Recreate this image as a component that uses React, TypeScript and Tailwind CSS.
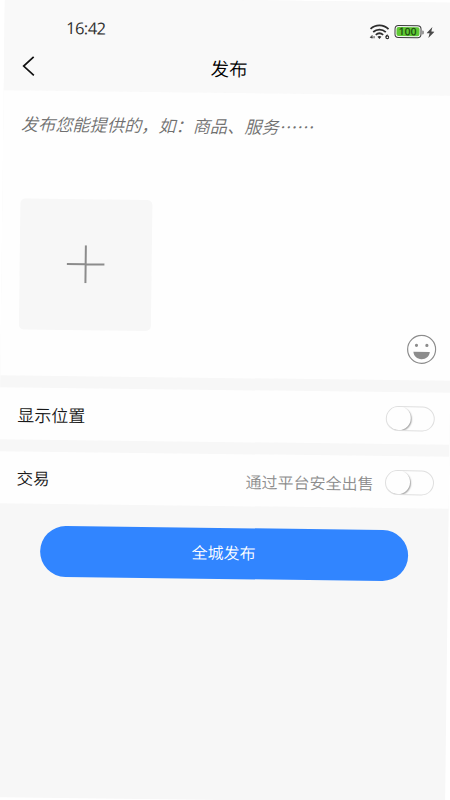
import { useState } from "react";

type SwitchProps = {
  checked: boolean;
  label: string;
  onChange: (value: boolean) => void;
};

function Switch({ checked, label, onChange }: SwitchProps) {
  return (
    <button
      role="switch"
      aria-checked={checked}
      aria-label={label}
      onClick={() => onChange(!checked)}
      className={`flex h-[25px] w-[49px] shrink-0 items-center overflow-hidden rounded-full border ${
        checked ? "justify-end border-[#3185ff] bg-[#3185ff]" : "border-[#dfdfdf] bg-[#fefefe]"
      }`}
    >
      <span className="size-[24px] shrink-0 rounded-full bg-[#fefefe] shadow-[1px_1px_1.5px_rgba(0,0,0,0.35)]" />
    </button>
  );
}

function WifiIcon() {
  return (
    <svg width="20" height="16" viewBox="0 0 20 16" fill="none" stroke="#2e2e2e">
      <path d="M1 5.2C6.2.4 13.8.4 19 5.2" strokeWidth="1.8" />
      <path d="M3.7 8.2c3.7-3.3 8.9-3.3 12.6 0" strokeWidth="1.8" />
      <path d="M6.3 11c2.2-1.9 5.2-1.9 7.4 0" strokeWidth="1.8" />
      <path d="M8 12.9c1.2-.9 2.8-.9 4 0l-2 2.2z" fill="#2e2e2e" stroke="none" />
      <path d="M2.6 11.8.8 13.7h2.2M2.6 11.8v2.9M4.6 12.3v2.2" strokeWidth=".9" />
      <path d="M18.2 10.8c-1.2.8-1.7 1.5-1.7 2.4" strokeWidth="1.1" />
      <circle cx="17.9" cy="13.3" r="1.4" strokeWidth="1.1" />
    </svg>
  );
}

function StatusBar() {
  return (
    <div className="flex h-[43px] items-center justify-between pr-[20px] pl-[61.5px] pt-[16px]">
      <span className="font-['Open_Sans','Noto_Sans',sans-serif] pt-px text-[16.5px] leading-none font-medium tracking-[-0.5px] text-[#303030]">
        16:42
      </span>
      <div className="flex items-center">
        <WifiIcon />
        <div className="ml-[5px] flex h-[13px] w-[27px] items-center rounded-[4px] border-[1.5px] border-[#3a3a3a] p-px">
          <div className="flex h-full w-full items-center justify-center rounded-[2px] bg-[#5fc934] font-['Open_Sans',sans-serif] text-[10.5px] leading-none font-semibold text-[#1d4d10]">
            100
          </div>
        </div>
        <div className="ml-px h-[4px] w-[1.5px] rounded-r-sm bg-[#3a3a3a]" />
        <svg className="ml-[3px]" width="8" height="12" viewBox="0 0 8 12" fill="#4a4a4a">
          <path d="M5.8.5 0 6.9h3.1L1.9 11.5 8 5.1H4.8z" />
        </svg>
      </div>
    </div>
  );
}

export default function App() {
  const [content, setContent] = useState("");
  const [showLocation, setShowLocation] = useState(false);
  const [trade, setTrade] = useState(false);

  return (
    <div className="h-[800px] w-[450px] overflow-hidden bg-white font-['Noto_Sans_CJK_SC',sans-serif] font-[350]">
      <div className="flex h-[800px] w-[450px] rotate-[0.7deg] flex-col bg-[#f7f7f7]">
        <header className="h-[93px] shrink-0 bg-[#f9f9f9]">
          <StatusBar />
          <div className="grid h-[50px] grid-cols-[1fr_auto_1fr] items-center px-[18px]">
            <button aria-label="返回" className="w-fit">
              <svg width="13" height="21" viewBox="0 0 13 21" fill="none" stroke="#111" strokeWidth="1.7">
                <path d="M11.5 1.2 1.6 10.5l10.3 9.3" />
              </svg>
            </button>
            <h1 className="text-[18.5px] leading-none text-black">发布</h1>
          </div>
        </header>

        <section className="flex h-[285px] shrink-0 flex-col bg-[#fefefe] pr-[16.5px] pl-[17.5px] pt-[20px]">
          <textarea
            value={content}
            onChange={(e) => setContent(e.target.value)}
            placeholder="发布您能提供的，如：商品、服务……"
            className="h-[87.5px] w-full resize-none text-[17.2px] leading-[26px] italic outline-none placeholder:text-[#707070]"
          />
          <button
            aria-label="添加图片"
            className="flex h-[131.5px] w-[132px] items-center justify-center rounded-[5px] bg-[#f7f7f7]"
          >
            <svg width="38" height="38" viewBox="0 0 38 38" stroke="#8c8c8c" strokeWidth="2">
              <path d="M19 0v38M0 19h38" />
            </svg>
          </button>
          <button aria-label="表情" className="-mr-[2px] self-end">
            <svg width="30" height="30" viewBox="0 0 30 30" fill="#8c8c8c">
              <circle cx="15" cy="15" r="14" fill="none" stroke="#8c8c8c" strokeWidth="1.2" />
              <circle cx="9.8" cy="11" r="1.6" />
              <circle cx="20.2" cy="11" r="1.6" />
              <path d="M6.8 17.5h16.4c-.3 4.5-3.8 7.3-8.2 7.3s-7.9-2.8-8.2-7.3z" />
            </svg>
          </button>
        </section>

        <section className="mt-[12px] flex h-[52px] shrink-0 items-center justify-between bg-[#fefefe] pr-[15px] pl-[17.5px]">
          <span className="pt-px text-[17px] text-[#181818]">显示位置</span>
          <Switch label="显示位置" checked={showLocation} onChange={setShowLocation} />
        </section>

        <section className="mt-[12px] flex h-[52px] shrink-0 items-center bg-[#fefefe] pr-[15px] pl-[17.5px]">
          <span className="pt-px text-[16.5px] text-[#181818]">交易</span>
          <span className="mr-[11.5px] ml-auto pt-px text-[16px] text-[#8c8c8c]">通过平台安全出售</span>
          <Switch label="交易" checked={trade} onChange={setTrade} />
        </section>

        <button className="mr-[40.5px] ml-[41.5px] mt-[21.5px] h-[51px] shrink-0 rounded-full bg-[#3185ff] pb-[2px] text-[16px] text-white">
          全城发布
        </button>
      </div>
    </div>
  );
}
